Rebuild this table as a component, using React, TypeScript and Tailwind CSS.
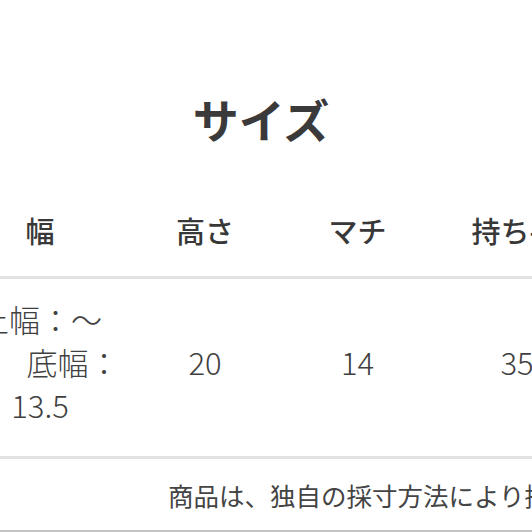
const columns = [
  { label: "幅", width: "w-[180px]" },
  { label: "高さ", width: "w-[150px]" },
  { label: "マチ", width: "w-[155px]" },
  { label: "持ち手", width: "w-[160px]" }
];

function Cell({ width, children, className = "" }: { width: string; children: React.ReactNode; className?: string }) {
  return <div className={`${width} shrink-0 flex flex-col items-center justify-center text-center ${className}`}>{children}</div>;
}

export default function App() {
  return (
    <div className="h-[532px] w-[532px] overflow-hidden bg-white font-['Noto_Sans_CJK_JP','Noto_Sans',sans-serif] text-[#383838]">
      <div className="h-[190px] pt-[90px] pr-[10px] text-center text-[46px] font-bold leading-[56px] text-[#3a3a3a]">サイズ</div>

      <div className="ml-[-50px] flex h-[86px] pb-[6px] text-[29px] font-medium leading-[40px]">
        {columns.map((col) => (
          <Cell key={col.label} width={col.width}>
            {col.label}
          </Cell>
        ))}
      </div>

      <div className="h-[3px] bg-[#e2e2e2]" />

      <div className="ml-[-50px] flex h-[177px] pb-[12px] text-[31px] font-light leading-[43px] text-[#404040]">
        <Cell width="w-[180px]">
          <span className="block">上幅：～</span>
          <span className="block pl-[66px]">底幅：</span>
          <span className="block">13.5</span>
        </Cell>
        <Cell width="w-[150px]">20</Cell>
        <Cell width="w-[155px]">14</Cell>
        <Cell width="w-[160px]" className="pl-[4px]">35</Cell>
      </div>

      <div className="h-[3px] bg-[#e2e2e2]" />

      <div className="flex h-[71px] items-center whitespace-nowrap pl-[168px] text-[25.5px] leading-[36px] text-[#444]">
        商品は、独自の採寸方法により採寸しております。
      </div>

      <div className="h-[2px] bg-[#c4c4c4]" />
    </div>
  );
}
